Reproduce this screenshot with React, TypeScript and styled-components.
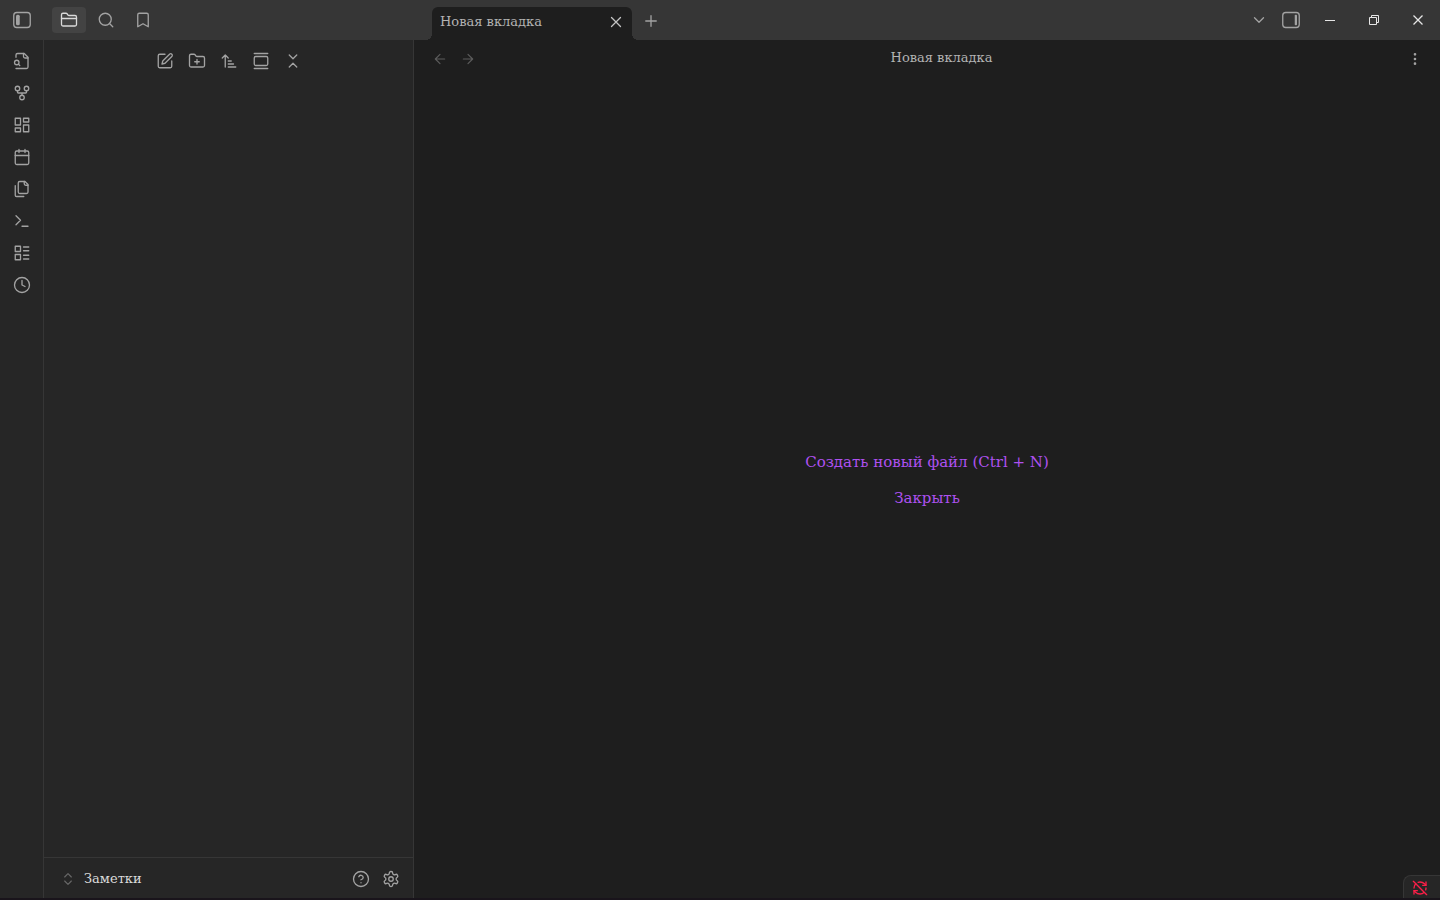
import React from 'react';
import styled, { createGlobalStyle } from 'styled-components';

const GlobalStyle = createGlobalStyle`
  *, *::before, *::after { box-sizing: border-box; }
  html, body, #root { height: 100%; }
  body {
    margin: 0;
    background: #1e1e1e;
    color: #b3b3b3;
    font: 13px/20px "DejaVu Serif", serif;
    overflow: hidden;
  }
  button, a { font: inherit; color: inherit; }
`;

const icons = {
  folder: (
    <>
      <path d="M20 20a2 2 0 0 0 2-2V8a2 2 0 0 0-2-2h-7.9a2 2 0 0 1-1.69-.9L9.6 3.9A2 2 0 0 0 7.93 3H4a2 2 0 0 0-2 2v13a2 2 0 0 0 2 2Z" />
      <path d="M2 10h20" />
    </>
  ),
  search: (
    <>
      <circle cx="11" cy="11" r="8" />
      <path d="m21 21-4.3-4.3" />
    </>
  ),
  bookmark: <path d="m19 21-7-4-7 4V5a2 2 0 0 1 2-2h10a2 2 0 0 1 2 2v16z" />,
  fileSearch: (
    <>
      <path d="M4 22h14a2 2 0 0 0 2-2V7l-5-5H6a2 2 0 0 0-2 2v3" />
      <path d="M14 2v4a2 2 0 0 0 2 2h4" />
      <circle cx="5" cy="14" r="3" />
      <path d="m9 18-1.5-1.5" />
    </>
  ),
  fork: (
    <>
      <circle cx="12" cy="18" r="3" />
      <circle cx="6" cy="6" r="3" />
      <circle cx="18" cy="6" r="3" />
      <path d="M18 9v2c0 .6-.4 1-1 1H7c-.6 0-1-.4-1-1V9M12 12v3" />
    </>
  ),
  dashboard: (
    <>
      <rect x="3" y="3" width="7" height="9" />
      <rect x="14" y="3" width="7" height="5" />
      <rect x="14" y="12" width="7" height="9" />
      <rect x="3" y="16" width="7" height="5" />
    </>
  ),
  calendar: (
    <>
      <rect x="3" y="4" width="18" height="18" rx="2" />
      <path d="M16 2v4M8 2v4M3 10h18" />
    </>
  ),
  files: (
    <>
      <path d="M20 7h-3a2 2 0 0 1-2-2V2" />
      <path d="M9 18a2 2 0 0 1-2-2V4a2 2 0 0 1 2-2h7l4 4v10a2 2 0 0 1-2 2Z" />
      <path d="M3 7.6v12.8A1.6 1.6 0 0 0 4.6 22h9.8" />
    </>
  ),
  terminal: <path d="m4 17 6-6-6-6M12 19h8" />,
  list: (
    <>
      <rect x="3" y="3" width="7" height="7" />
      <rect x="3" y="14" width="7" height="7" />
      <path d="M14 4h7M14 9h7M14 15h7M14 20h7" />
    </>
  ),
  clock: (
    <>
      <circle cx="12" cy="12" r="10" />
      <path d="M12 6v6l4 2" />
    </>
  ),
  edit: (
    <>
      <path d="M12 3H5a2 2 0 0 0-2 2v14a2 2 0 0 0 2 2h14a2 2 0 0 0 2-2v-7" />
      <path d="M18.4 2.6a2.17 2.17 0 0 1 3 3L12 15l-4 1 1-4Z" />
    </>
  ),
  folderPlus: (
    <>
      <path d="M12 10v6M9 13h6" />
      <path d="M20 20a2 2 0 0 0 2-2V8a2 2 0 0 0-2-2h-7.9a2 2 0 0 1-1.69-.9L9.6 3.9A2 2 0 0 0 7.93 3H4a2 2 0 0 0-2 2v13a2 2 0 0 0 2 2Z" />
    </>
  ),
  sort: <path d="m3 8 4-4 4 4M7 4v16M11 12h4M11 16h7M11 20h10" />,
  gallery: (
    <>
      <path d="M3 2h18M3 22h18" />
      <rect x="3" y="6" width="18" height="12" rx="2" />
    </>
  ),
  collapse: <path d="m7 20 5-5 5 5M7 4l5 5 5-5" />,
  updown: <path d="m7 15 5 5 5-5M7 9l5-5 5 5" />,
  help: (
    <>
      <circle cx="12" cy="12" r="10" />
      <path d="M9.09 9a3 3 0 0 1 5.83 1c0 2-3 3-3 3M12 17h.01" />
    </>
  ),
  settings: (
    <>
      <path d="M12.22 2h-.44a2 2 0 0 0-2 2v.18a2 2 0 0 1-1 1.73l-.43.25a2 2 0 0 1-2 0l-.15-.08a2 2 0 0 0-2.73.73l-.22.38a2 2 0 0 0 .73 2.73l.15.1a2 2 0 0 1 1 1.72v.51a2 2 0 0 1-1 1.74l-.15.09a2 2 0 0 0-.73 2.73l.22.38a2 2 0 0 0 2.73.73l.15-.08a2 2 0 0 1 2 0l.43.25a2 2 0 0 1 1 1.73V20a2 2 0 0 0 2 2h.44a2 2 0 0 0 2-2v-.18a2 2 0 0 1 1-1.73l.43-.25a2 2 0 0 1 2 0l.15.08a2 2 0 0 0 2.73-.73l.22-.39a2 2 0 0 0-.73-2.73l-.15-.08a2 2 0 0 1-1-1.74v-.5a2 2 0 0 1 1-1.74l.15-.09a2 2 0 0 0 .73-2.73l-.22-.38a2 2 0 0 0-2.73-.73l-.15.08a2 2 0 0 1-2 0l-.43-.25a2 2 0 0 1-1-1.73V4a2 2 0 0 0-2-2z" />
      <circle cx="12" cy="12" r="3" />
    </>
  ),
  close: <path d="M18 6 6 18M6 6l12 12" />,
  plus: <path d="M5 12h14M12 5v14" />,
  chevron: <path d="m6 9 6 6 6-6" />,
  back: <path d="m12 19-7-7 7-7M19 12H5" />,
  forward: <path d="M5 12h14M12 5l7 7-7 7" />,
  more: (
    <>
      <circle cx="12" cy="12" r="1" />
      <circle cx="12" cy="5" r="1" />
      <circle cx="12" cy="19" r="1" />
    </>
  ),
  leftPanel: (
    <>
      <rect x="1" y="2" width="22" height="20" rx="4" />
      <rect x="4" y="5" width="5" height="14" rx="2" fill="currentColor" stroke="none" />
    </>
  ),
  rightPanel: (
    <>
      <rect x="1" y="2" width="22" height="20" rx="4" />
      <rect x="17" y="5" width="3" height="14" rx="1" fill="currentColor" stroke="none" />
    </>
  ),
  syncOff: (
    <>
      <path d="M21 8L18.74 5.74A9.75 9.75 0 0 0 12 3C11 3 10.03 3.16 9.13 3.47M8 16H3v5M3 12C3 9.51 4 7.26 5.64 5.64" />
      <path d="m3 16 2.26 2.26A9.75 9.75 0 0 0 12 21c2.49 0 4.74-1 6.36-2.64M21 12c0 1-.16 1.97-.47 2.87M21 3v5h-5M22 22 2 2" />
    </>
  ),
};

type IconName = keyof typeof icons;

const Svg = styled.svg`
  display: block;
  flex: none;
  fill: none;
  stroke: currentColor;
  stroke-linecap: round;
  stroke-linejoin: round;
`;

const Icon = ({ name, size = 18, weight = 1.75 }: { name: IconName; size?: number; weight?: number }) => (
  <Svg viewBox="0 0 24 24" width={size} height={size} strokeWidth={weight} aria-hidden="true">
    {icons[name]}
  </Svg>
);

const IconButton = styled.button<{ $w?: number; $h?: number; $active?: boolean; $color?: string }>`
  display: flex;
  flex: none;
  align-items: center;
  justify-content: center;
  width: ${(p) => p.$w ?? 32}px;
  height: ${(p) => p.$h ?? 26}px;
  padding: 0;
  border: 0;
  border-radius: 4px;
  background: ${(p) => (p.$active ? '#434343' : 'transparent')};
  color: ${(p) => p.$color ?? (p.$active ? '#dadada' : '#a3a3a3')};
  cursor: pointer;
`;

const Window = styled.div`
  display: flex;
  flex-direction: column;
  height: 100vh;
  border-bottom: 2px solid #19141b;
`;

const TitleBar = styled.header`
  display: flex;
  flex: none;
  height: 40px;
  background: #363636;
`;

const SideTabs = styled.div`
  display: flex;
  flex: none;
  align-items: center;
  gap: 3px;
  width: 414px;
  padding-left: 6px;
`;

const ToggleSlot = styled.div`
  margin-right: 11px;
`;

const TabStrip = styled.div`
  display: flex;
  flex: 1;
  align-items: flex-end;
  min-width: 0;
  padding-left: 18px;
`;

const Tab = styled.div`
  position: relative;
  display: flex;
  align-items: center;
  justify-content: space-between;
  width: 200px;
  height: 33px;
  padding: 0 6px 4px 8px;
  border-radius: 6px 6px 0 0;
  background: #1e1e1e;

  &::before,
  &::after {
    content: '';
    position: absolute;
    bottom: 0;
    width: 6px;
    height: 6px;
  }
  &::before {
    right: 100%;
    background: radial-gradient(circle at 0 0, transparent 6px, #1e1e1e 6px);
  }
  &::after {
    left: 100%;
    background: radial-gradient(circle at 100% 0, transparent 6px, #1e1e1e 6px);
  }
`;

const NewTabSlot = styled.div`
  align-self: center;
  padding: 2px 0 0 6px;
`;

const WindowControls = styled.div`
  display: flex;
  align-items: center;
`;

const PanelControls = styled.div`
  display: flex;
  margin-right: 1px;
`;

const Caption = styled.svg`
  display: block;
  fill: none;
  stroke: #e6e6e6;
`;

const Body = styled.div`
  display: flex;
  flex: 1;
  min-height: 0;
`;

const Ribbon = styled.nav`
  display: flex;
  flex: none;
  flex-direction: column;
  align-items: center;
  gap: 6px;
  width: 44px;
  padding-top: 8px;
  border-right: 1px solid #363636;
  background: #262626;
`;

const Sidebar = styled.aside`
  display: flex;
  flex: none;
  flex-direction: column;
  width: 370px;
  border-right: 1px solid #363636;
  background: #262626;
`;

const FileActions = styled.div`
  display: flex;
  justify-content: center;
  padding-top: 8px;
`;

const VaultBar = styled.footer`
  display: flex;
  align-items: center;
  height: 41px;
  margin-top: auto;
  padding: 2px 7px 0 16px;
  border-top: 1px solid #363636;
`;

const VaultButton = styled.button`
  display: flex;
  flex: 1;
  align-items: center;
  gap: 8px;
  padding: 0;
  border: 0;
  background: none;
  color: #686868;
  cursor: pointer;
`;

const VaultName = styled.span`
  color: #dadada;
`;

const Main = styled.main`
  position: relative;
  display: flex;
  flex: 1;
  flex-direction: column;
  min-width: 0;
  background: #1e1e1e;
`;

const ViewHeader = styled.div`
  display: flex;
  align-items: center;
  height: 38px;
  padding: 0 11px 0 12px;
`;

const ViewTitle = styled.h1`
  flex: 1;
  margin: 0;
  padding-bottom: 2px;
  font-size: 13px;
  font-weight: 400;
  text-align: center;
`;

const EmptyState = styled.div`
  display: flex;
  flex: 1;
  flex-direction: column;
  align-items: center;
  justify-content: center;
  gap: 16px;
  padding-bottom: 17px;
`;

const ActionLink = styled.a`
  color: #ae51f0;
  font-size: 15px;
  line-height: 20px;
  text-decoration: none;
`;

const StatusBar = styled.div`
  position: absolute;
  right: 0;
  bottom: 0;
  display: flex;
  align-items: center;
  width: 37px;
  height: 23px;
  padding: 2px 0 0 8px;
  border: 1px solid #363636;
  border-width: 1px 0 0 1px;
  border-radius: 8px 0 0 0;
  background: #262626;
  color: #fb1f48;
`;

const ribbonItems: [IconName, string][] = [
  ['fileSearch', 'Быстрый переход'],
  ['fork', 'Граф'],
  ['dashboard', 'Холст'],
  ['calendar', 'Ежедневная заметка'],
  ['files', 'Шаблоны'],
  ['terminal', 'Палитра команд'],
  ['list', 'Список'],
  ['clock', 'История'],
];

const fileActions: [IconName, string][] = [
  ['edit', 'Новая заметка'],
  ['folderPlus', 'Новая папка'],
  ['sort', 'Сортировка'],
  ['gallery', 'Показать текущий файл'],
  ['collapse', 'Свернуть все'],
];

export default function App() {
  return (
    <Window>
      <GlobalStyle />
      <TitleBar>
        <SideTabs>
          <ToggleSlot>
            <IconButton aria-label="Боковая панель">
              <Icon name="leftPanel" />
            </IconButton>
          </ToggleSlot>
          <IconButton $w={34} $active aria-label="Файлы">
            <Icon name="folder" />
          </IconButton>
          <IconButton $w={34} aria-label="Поиск">
            <Icon name="search" />
          </IconButton>
          <IconButton $w={34} aria-label="Закладки">
            <Icon name="bookmark" />
          </IconButton>
        </SideTabs>
        <TabStrip>
          <Tab>
            <span>Новая вкладка</span>
            <IconButton $w={20} $h={20} $color="#c4c4c4" aria-label="Закрыть вкладку">
              <Icon name="close" />
            </IconButton>
          </Tab>
          <NewTabSlot>
            <IconButton $w={26} aria-label="Создать вкладку">
              <Icon name="plus" />
            </IconButton>
          </NewTabSlot>
        </TabStrip>
        <WindowControls>
          <PanelControls>
            <IconButton aria-label="Список вкладок">
              <Icon name="chevron" />
            </IconButton>
            <IconButton aria-label="Правая панель">
              <Icon name="rightPanel" />
            </IconButton>
          </PanelControls>
          <IconButton $w={44} $h={40} aria-label="Свернуть окно">
            <Caption width="12" height="12" viewBox="0 0 12 12">
              <path d="M1 6.5h10" />
            </Caption>
          </IconButton>
          <IconButton $w={44} $h={40} aria-label="Восстановить окно">
            <Caption width="12" height="12" viewBox="0 0 12 12">
              <path d="M1.5 3.5h7v7h-7zM3.5 3.5v-2h7v7h-2" />
            </Caption>
          </IconButton>
          <IconButton $w={44} $h={40} aria-label="Закрыть окно">
            <Caption width="12" height="12" viewBox="0 0 12 12" strokeWidth="1.3">
              <path d="m1.5 1.5 9 9M10.5 1.5l-9 9" />
            </Caption>
          </IconButton>
        </WindowControls>
      </TitleBar>
      <Body>
        <Ribbon>
          {ribbonItems.map(([name, label]) => (
            <IconButton key={name} aria-label={label}>
              <Icon name={name} />
            </IconButton>
          ))}
        </Ribbon>
        <Sidebar>
          <FileActions>
            {fileActions.map(([name, label]) => (
              <IconButton key={name} aria-label={label}>
                <Icon name={name} />
              </IconButton>
            ))}
          </FileActions>
          <VaultBar>
            <VaultButton>
              <Icon name="updown" size={16} />
              <VaultName>Заметки</VaultName>
            </VaultButton>
            <IconButton $w={30} aria-label="Справка">
              <Icon name="help" />
            </IconButton>
            <IconButton $w={30} aria-label="Настройки">
              <Icon name="settings" />
            </IconButton>
          </VaultBar>
        </Sidebar>
        <Main>
          <ViewHeader>
            <IconButton $w={28} $color="#5c5c5c" aria-label="Назад">
              <Icon name="back" size={16} />
            </IconButton>
            <IconButton $w={28} $color="#5c5c5c" aria-label="Вперёд">
              <Icon name="forward" size={16} />
            </IconButton>
            <ViewTitle>Новая вкладка</ViewTitle>
            <IconButton $w={28} aria-label="Ещё">
              <Icon name="more" size={16} weight={2} />
            </IconButton>
          </ViewHeader>
          <EmptyState>
            <ActionLink href="#new">Создать новый файл (Ctrl + N)</ActionLink>
            <ActionLink href="#close">Закрыть</ActionLink>
          </EmptyState>
          <StatusBar>
            <Icon name="syncOff" size={16} weight={2} />
          </StatusBar>
        </Main>
      </Body>
    </Window>
  );
}
